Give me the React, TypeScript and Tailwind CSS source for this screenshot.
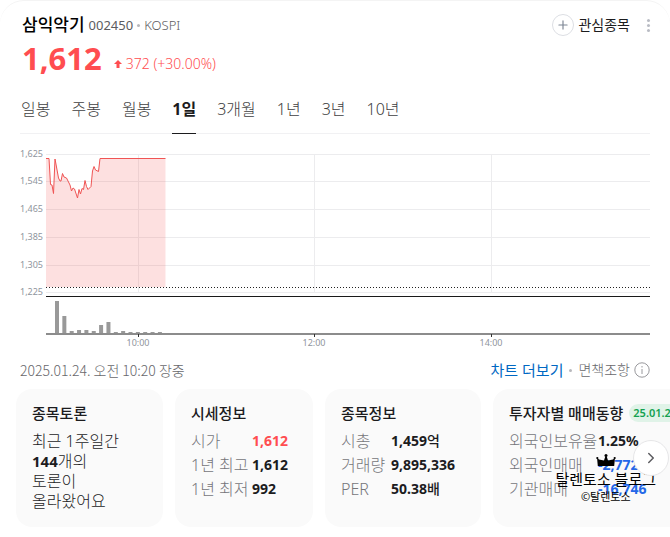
import { useState } from "react";
import { Plus, ChevronRight } from "lucide-react";
import clsx from "clsx";

type Row = { label: string; value: string; unit?: string; tone?: "up" | "down" };

const TABS = ["일봉", "주봉", "월봉", "1일", "3개월", "1년", "3년", "10년"];

const PRICE_ROWS: Row[] = [
  { label: "시가", value: "1,612", tone: "up" },
  { label: "1년 최고", value: "1,612" },
  { label: "1년 최저", value: "992" },
];

const STOCK_ROWS: Row[] = [
  { label: "시총", value: "1,459", unit: "억" },
  { label: "거래량", value: "9,895,336" },
  { label: "PER", value: "50.38", unit: "배" },
];

const INVESTOR_ROWS: Row[] = [
  { label: "외국인보유율", value: "1.25%" },
  { label: "외국인매매", value: "-2,772", tone: "down" },
  { label: "기관매매", value: "-16,746", tone: "down" },
];

const Y_TICKS = [
  { label: "1,625", y: 9 },
  { label: "1,545", y: 36 },
  { label: "1,465", y: 64 },
  { label: "1,385", y: 92 },
  { label: "1,305", y: 120 },
  { label: "1,225", y: 147 },
];

const X_TICKS = [
  { label: "10:00", x: 118 },
  { label: "12:00", x: 294 },
  { label: "14:00", x: 471 },
];

const VOLUMES = [33, 18, 3, 4, 4, 3, 9, 12, 2, 3, 2, 2, 2, 2, 2];

const PRICE_LINE =
  "26,13.5 29,13.5 30.5,39.5 32,40 33.5,48.5 35,14 36.5,22 38.5,33 40,36 41,36 42.5,28.5 44,32 46.5,33 48,36 50,40 51.5,46 53,43 54.5,44 57.5,53 59,44.5 60.5,49 62,43.5 63.5,44.5 65,35.5 66.5,41.5 68,44.5 71,41.5 72.5,26 74,21.5 75.5,25 78.5,26.5 80,13.5 145.5,13.5";

function Chart() {
  return (
    <svg viewBox="0 0 630 205" className="block w-full" role="img" aria-label="삼익악기 1일 차트">
      {Y_TICKS.map((t) => (
        <g key={t.label}>
          <line x1="26" x2="630" y1={t.y + 0.5} y2={t.y + 0.5} stroke="#ececee" />
          <text x="23" y={t.y + 3} textAnchor="end" className="fill-[#8f959d] font-['Noto_Sans'] text-[9px]">
            {t.label}
          </text>
        </g>
      ))}
      {X_TICKS.map((t) => (
        <line key={t.label} x1={t.x + 0.5} x2={t.x + 0.5} y1="9" y2="148" stroke="#ececee" />
      ))}
      <polygon points={`${PRICE_LINE} 145.5,142 26,142`} fill="#f04040" fillOpacity="0.16" />
      <polyline points={PRICE_LINE} fill="none" stroke="#f05454" />
      <line x1="26" x2="630" y1="142.5" y2="142.5" stroke="#222" strokeDasharray="1 2" />
      <line x1="26" x2="630" y1="151.5" y2="151.5" stroke="#1a1a1a" />
      {VOLUMES.map((v, i) => (
        <rect key={i} x={35 + i * 7.35} y={189 - v} width="4" height={v} fill="#999" />
      ))}
      <rect x="26" y="188" width="604" height="2" fill="#8c8c8c" />
      {X_TICKS.map((t) => (
        <g key={t.label}>
          <rect x={t.x} y="189" width="1" height="3" fill="#333" />
          <text x={t.x} y="201" textAnchor="middle" className="fill-[#8f959d] font-['Noto_Sans'] text-[9px]">
            {t.label}
          </text>
        </g>
      ))}
    </svg>
  );
}

function InfoTable({ rows, labelWidth }: { rows: Row[]; labelWidth: string }) {
  return (
    <table className="mt-1 text-base leading-6 whitespace-nowrap">
      <tbody>
        {rows.map((r) => (
          <tr key={r.label}>
            <th scope="row" className={clsx("p-0 text-left font-light text-[#76767a]", labelWidth)}>
              {r.label}
            </th>
            <td
              className={clsx(
                "p-0 text-sm leading-6 font-bold",
                r.tone === "up" && "text-[#ff4d50]",
                r.tone === "down" && "text-[#2468e8]",
              )}
            >
              {r.value}
              {r.unit && <span className="font-medium">{r.unit}</span>}
            </td>
          </tr>
        ))}
      </tbody>
    </table>
  );
}

const card = "shrink-0 rounded-2xl bg-[#fafafa] px-4 pt-3 pb-4";
const cardTitle = "text-[15px] leading-6 font-medium whitespace-nowrap text-[#1c1c1e]";

export default function App() {
  const [tab, setTab] = useState("1일");

  return (
    <main className="overflow-hidden rounded-t-3xl border-t border-[#f4f4f4] bg-white pb-3 font-['Noto_Sans','Noto_Sans_CJK_KR',sans-serif] text-[#1c1c1e]">
      <header className="flex items-start justify-between pt-3 pr-3.5 pl-[22px]">
        <div>
          <div className="flex items-center gap-1 text-[13px] leading-6 text-[#5c5c60]">
            <h1 className="text-[17px] font-medium text-black">삼익악기</h1>
            <span>002450</span>
            <i className="size-[3px] rounded-full bg-[#b8b8bc]" />
            <span className="font-light">KOSPI</span>
          </div>
          <div className="flex items-end gap-3 text-[#ff4d50]">
            <strong className="text-[31px] leading-[42px] font-bold">1,612</strong>
            <span className="flex items-center gap-1 text-sm leading-[30px] font-light">
              <svg viewBox="0 0 8 8" className="size-2 fill-current" aria-hidden="true">
                <path d="M4 0 8 4H5.5V8h-3V4H0z" />
              </svg>
              372 (+30.00%)
            </span>
          </div>
        </div>
        <div className="flex items-center gap-2.5">
          <button className="flex items-center gap-1 text-sm leading-6">
            <span className="flex size-[22px] items-center justify-center rounded-full border border-[#dcdee3]">
              <Plus className="size-3.5 text-[#7d8694]" />
            </span>
            관심종목
          </button>
          <button aria-label="더보기" className="flex w-4 flex-col items-center gap-0.5">
            <i className="size-[3px] rounded-full bg-[#b9bcc4]" />
            <i className="size-[3px] rounded-full bg-[#b9bcc4]" />
            <i className="size-[3px] rounded-full bg-[#b9bcc4]" />
          </button>
        </div>
      </header>

      <nav className="mx-5 mt-3 flex gap-[21px] border-b border-[#f1f1f3] pl-px">
        {TABS.map((t) => (
          <button
            key={t}
            onClick={() => setTab(t)}
            className={clsx(
              "-mb-px border-b pt-1 pb-2.5 text-base leading-7",
              t === tab ? "border-[#1c1c1e] font-bold" : "border-transparent font-light text-[#3f3f42]",
            )}
          >
            {t}
          </button>
        ))}
      </nav>

      <div className="mx-5 mt-[11px]">
        <Chart />
      </div>

      <div className="mx-5 mt-2 flex items-center justify-between text-sm leading-6 font-light text-[#68686c]">
        <time className="font-['Noto_Sans_CJK_KR',sans-serif]">2025.01.24. 오전 10:20 장중</time>
        <div className="flex items-center gap-1.5">
          <a href="#chart" className="text-[15px] font-normal text-[#0068c3]">
            차트 더보기
          </a>
          <i className="size-[3px] rounded-full bg-[#b8b8bc]" />
          <button className="flex items-center gap-1">
            면책조항
            <svg viewBox="0 0 16 16" className="size-4" fill="none" stroke="#98989c" aria-hidden="true">
              <circle cx="8" cy="8" r="7.2" />
              <path d="M8 7v5M8 4v1.5" />
            </svg>
          </button>
        </div>
      </div>

      <div className="relative mt-[7px]">
        <div className="flex gap-3 overflow-hidden pl-4">
          <section className={clsx(card, "w-[147px]")}>
            <h2 className={cardTitle}>종목토론</h2>
            <p className="mt-1.5 text-base leading-5 font-light">
              최근 1주일간
              <br />
              <b className="text-[15px] font-bold">144</b>개의
              <br />
              토론이
              <br />
              올라왔어요
            </p>
          </section>
          <section className={clsx(card, "w-[138px]")}>
            <h2 className={cardTitle}>시세정보</h2>
            <InfoTable rows={PRICE_ROWS} labelWidth="min-w-[61px]" />
          </section>
          <section className={clsx(card, "w-[156px]")}>
            <h2 className={cardTitle}>종목정보</h2>
            <InfoTable rows={STOCK_ROWS} labelWidth="min-w-[50px]" />
          </section>
          <section className={clsx(card, "w-[220px]")}>
            <h2 className={clsx(cardTitle, "flex items-center gap-1.5")}>
              투자자별 매매동향
              <span className="rounded-full bg-[#e0f3e8] px-1 text-[11px] leading-[18px] font-semibold text-[#12a150]">
                25.01.23.
              </span>
            </h2>
            <InfoTable rows={INVESTOR_ROWS} labelWidth="min-w-[89px]" />
          </section>
        </div>

        <div className="pointer-events-none absolute top-16 right-3.5 flex flex-col items-center text-black">
          <svg viewBox="0 0 20 14" className="h-3.5 w-5" aria-hidden="true">
            <path d="M1 4.5 3 6.5 8 7.5 9.3 3.5h1.4L12 7.5l5-1 2-2-.8 8.5H1.8z" />
            <circle cx="10" cy="2.6" r="1.5" />
            <circle cx="1.3" cy="5" r="1.1" />
            <circle cx="18.7" cy="5" r="1.1" />
          </svg>
          <span className="text-[15px] leading-6">탈렌토소 블로그</span>
          <span className="text-[11px] leading-3">©탈렌토소</span>
        </div>

        <button
          aria-label="다음"
          className="absolute top-[51px] right-px flex size-9 items-center justify-center rounded-full border border-[#e6e6e8] bg-white"
        >
          <ChevronRight className="size-[18px] text-[#5c5c60]" />
        </button>
      </div>
    </main>
  );
}
